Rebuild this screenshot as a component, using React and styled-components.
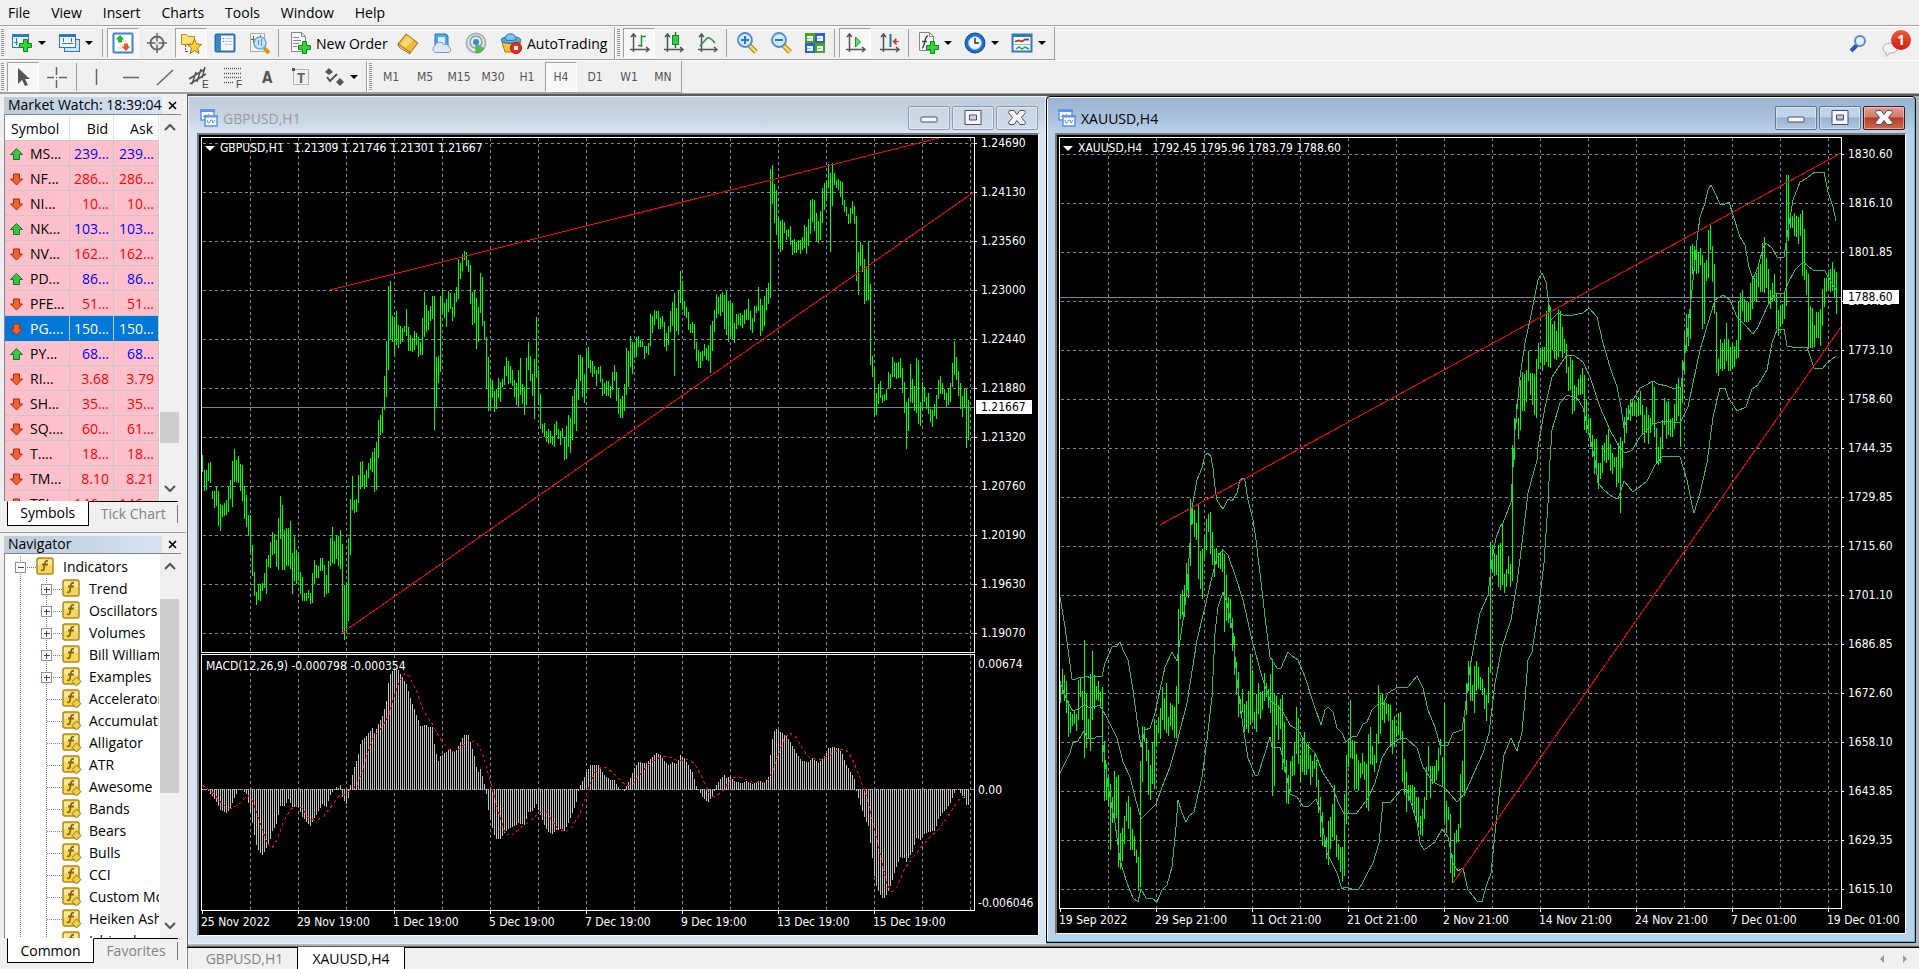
import styled, { createGlobalStyle, css } from "styled-components";

const MARKET_ROWS = [
  ["MS...", "239...", "239...", "up"],
  ["NF...", "286...", "286...", "down"],
  ["NI...", "10...", "10...", "down"],
  ["NK...", "103...", "103...", "up"],
  ["NV...", "162...", "162...", "down"],
  ["PD...", "86...", "86...", "up"],
  ["PFE...", "51...", "51...", "down"],
  ["PG....", "150...", "150...", "down"],
  ["PY...", "68...", "68...", "up"],
  ["RI...", "3.68", "3.79", "down"],
  ["SH...", "35...", "35...", "down"],
  ["SQ....", "60...", "61...", "down"],
  ["T....", "18...", "18...", "down"],
  ["TM...", "8.10", "8.21", "down"],
  ["TSL...", "146...", "146...", "down"],
];

const TREE = [
  ["Trend", "group"],
  ["Oscillators", "group"],
  ["Volumes", "group"],
  ["Bill Williams", "group"],
  ["Examples", "examples"],
  ["Accelerator", "custom"],
  ["Accumulation", "custom"],
  ["Alligator", "custom"],
  ["ATR", "custom"],
  ["Awesome", "custom"],
  ["Bands", "custom"],
  ["Bears", "custom"],
  ["Bulls", "custom"],
  ["CCI", "custom"],
  ["Custom Moving", "custom"],
  ["Heiken Ashi", "custom"],
  ["Ichimoku", "custom"],
];

const MENU = ["File", "View", "Insert", "Charts", "Tools", "Window", "Help"];
const PERIODS = ["M1", "M5", "M15", "M30", "H1", "H4", "D1", "W1", "MN"];

// high,low of every bar, one bar each 2px
const GBP_BARS =
  "455,472 470,491 470,490 463,481 462,483 491,499 491,508 487,506 491,526 504,531 505,517 503,516 500,515 487,512 480,499 461,507 449,482 460,482 456,483 464,491 465,501 486,519 495,527 515,536 515,552 545,576 572,596 592,605 584,600 584,601 583,591 573,588 559,594 555,567 542,568 532,555 534,554 540,567 518,570 496,539 505,570 530,570 528,566 528,566 521,569 553,594 537,581 550,584 553,581 572,594 577,601 593,601 593,601 590,598 593,604 573,603 560,584 565,578 566,578 558,571 558,571 565,597 575,594 561,593 538,566 527,563 541,564 536,559 536,566 530,569 544,632 585,640 583,632 538,621 499,555 476,510 500,513 499,512 475,503 462,489 461,487 475,489 470,486 463,478 458,470 452,472 448,492 442,490 420,458 415,435 407,433 376,410 341,397 286,370 281,339 316,342 317,357 311,345 325,348 326,344 328,342 326,332 309,336 327,351 335,351 338,352 331,350 333,345 337,357 342,355 318,355 292,337 305,332 311,330 306,321 296,319 296,430 357,407 356,383 296,372 290,312 303,318 299,327 291,312 293,309 307,321 293,317 287,302 259,299 263,279 254,271 251,260 252,266 260,272 265,304 292,325 290,323 298,349 307,342 273,313 277,326 321,340 337,389 357,411 379,410 380,398 391,412 389,409 378,398 382,402 379,387 366,385 357,376 361,384 366,383 370,386 380,397 383,405 370,407 358,395 384,404 387,415 358,405 342,370 356,381 374,396 359,419 317,378 370,405 394,429 424,433 423,437 431,442 429,444 431,443 436,445 424,447 421,435 429,439 431,445 428,438 437,460 426,459 415,447 418,453 396,440 389,424 379,431 355,400 355,381 357,397 374,403 351,392 347,368 360,373 361,377 366,374 370,386 367,374 366,382 379,396 383,394 381,396 381,396 386,398 372,390 365,381 372,401 389,414 399,418 396,418 384,411 348,395 351,387 336,367 342,374 342,358 337,357 336,347 340,347 341,347 346,359 346,353 343,355 314,346 316,333 310,325 311,319 311,329 318,329 316,327 322,347 333,351 326,345 311,332 302,326 293,376 308,331 290,335 271,303 281,310 301,316 307,318 312,330 324,333 322,333 324,349 342,361 350,368 352,368 351,361 344,356 348,360 345,361 325,373 321,351 310,332 294,318 297,314 294,316 292,312 295,329 291,335 301,342 302,336 303,339 323,343 314,329 314,325 313,326 315,328 310,324 309,320 299,320 311,330 318,333 306,322 306,313 287,311 299,336 305,331 296,326 288,310 283,304 169,298 165,204 184,223 190,235 218,247 221,252 220,250 222,233 230,240 229,237 226,245 240,255 239,253 242,253 240,250 240,254 237,250 225,248 227,254 219,246 200,234 199,222 200,231 213,241 221,243 211,240 188,223 183,210 182,200 164,188 173,252 163,206 173,185 180,188 179,190 181,197 182,205 200,212 207,216 214,224 208,223 201,214 206,224 216,281 252,295 242,266 245,272 259,304 266,301 241,300 284,365 356,377 369,417 393,415 384,404 381,398 395,403 394,401 389,400 372,388 374,388 357,377 362,377 363,379 362,378 358,378 368,393 382,413 402,449 398,431 364,402 379,403 386,411 358,413 360,424 402,426 382,410 387,402 397,409 393,414 409,422 410,427 404,416 395,419 380,399 376,394 383,394 389,400 393,407 388,405 383,402 363,387 341,375 357,380 371,396 383,409 396,417 388,408 389,448 400,440";

const XAU_BARS =
  "681,703 669,694 675,701 681,713 701,737 712,733 714,726 711,724 714,731 680,720 677,697 691,720 640,758 694,748 719,739 674,751 651,720 675,709 686,700 681,701 692,708 687,762 741,801 764,800 777,806 784,850 797,823 771,822 777,818 775,867 833,869 828,861 816,844 802,821 796,829 807,850 829,850 836,856 850,863 857,891 761,887 726,782 727,742 738,761 750,795 765,800 742,784 719,789 725,746 717,733 708,739 687,720 698,730 683,733 717,736 703,726 705,730 707,738 686,738 609,704 594,619 590,615 585,617 563,595 561,598 499,566 507,524 510,537 523,540 504,579 551,589 549,599 535,558 519,550 514,532 512,554 532,565 549,577 548,564 553,568 553,569 549,572 554,632 575,621 597,623 599,628 618,651 636,675 662,695 672,717 699,714 689,712 704,732 701,729 691,733 654,725 670,720 712,729 694,732 683,714 692,719 691,710 673,701 683,697 689,708 674,713 659,796 693,786 696,725 705,740 699,729 695,770 722,772 760,803 775,804 761,791 756,776 742,775 707,754 718,764 755,782 738,772 732,775 743,775 744,769 755,785 761,777 754,769 760,787 780,813 797,837 812,846 837,847 837,859 821,865 817,849 804,837 785,840 835,857 844,860 847,872 847,882 794,876 755,824 741,767 700,758 740,759 741,790 754,789 760,791 763,778 753,774 762,780 764,808 734,811 727,764 746,765 755,772 734,763 685,744 695,734 693,720 700,723 703,714 704,721 705,745 720,754 716,747 726,737 713,735 712,740 731,782 759,795 772,812 785,801 785,803 785,809 787,815 797,822 797,827 816,835 809,836 797,819 767,800 746,771 766,798 766,784 766,783 760,780 748,771 739,755 757,786 703,823 801,833 807,820 814,873 855,883 833,877 830,843 824,842 774,828 761,792 718,796 683,715 661,691 667,701 685,701 666,713 661,691 667,689 677,690 679,695 688,709 695,721 667,703 542,673 545,572 553,576 555,575 545,587 543,590 523,585 574,593 569,587 556,574 564,587 445,581 418,460 404,423 418,439 380,430 372,411 374,411 370,402 351,381 373,395 373,405 374,415 359,418 343,369 349,362 347,371 347,365 311,362 304,367 307,368 324,350 321,359 331,360 309,357 311,351 327,358 339,353 344,373 367,391 357,390 360,414 385,411 387,401 379,395 375,395 368,394 375,430 399,433 418,435 418,447 435,457 439,474 439,468 463,489 463,479 445,473 443,461 435,463 429,460 444,471 453,474 457,467 457,487 443,483 437,513 441,468 417,443 408,433 405,420 399,421 399,416 400,416 402,417 397,416 391,415 405,434 415,443 407,433 415,444 418,433 382,425 387,437 428,463 447,465 437,463 420,448 398,425 402,439 401,435 419,437 418,437 404,429 384,421 378,416 388,447 360,403 333,375 314,351 314,346 246,339 244,274 246,271 243,274 252,273 248,265 255,329 263,324 260,281 230,278 224,250 246,282 264,314 312,373 359,376 339,369 343,371 339,369 323,361 339,371 347,371 343,369 346,367 340,359 301,358 293,340 290,311 299,322 302,322 302,322 283,320 276,309 278,301 273,302 266,287 264,292 243,292 237,293 258,288 269,303 290,309 283,302 274,301 293,329 310,336 305,326 304,324 294,319 175,306 175,241 215,228 216,228 213,236 216,237 217,244 214,236 210,276 229,280 270,295 274,349 306,348 308,348 325,347 312,338 312,338 309,346 289,326 278,307 278,292 272,290 269,292 262,291 269,297 272,314";

// bar index,y of the histogram outline; the bars between are interpolated
const MACD_KEYS =
  "0,789 3,791 5,796 7,802 9,810 12,813 14,808 16,798 18,790 20,789 22,794 24,812 25,823 26,835 27,845 28,850 30,855 32,848 34,839 35,831 37,824 38,815 39,806 41,806 43,799 45,807 48,807 50,817 54,826 56,818 58,811 60,804 62,807 64,795 66,789 67,787 68,788 69,785 70,797 72,804 73,798 74,785 75,775 76,767 78,754 79,744 80,740 82,736 85,728 86,733 88,724 90,716 91,709 92,701 93,683 94,674 95,671 97,669 98,670 100,677 102,684 104,698 106,709 108,720 109,726 112,725 113,727 115,727 116,744 117,754 118,761 119,756 121,753 124,749 125,752 127,750 128,746 130,738 131,735 133,735 134,742 136,756 137,767 138,772 139,769 140,776 141,784 142,794 143,810 144,820 145,828 146,835 147,839 149,839 151,833 153,829 156,826 158,823 161,825 163,812 165,811 167,804 169,815 171,825 173,832 175,834 177,830 180,829 181,831 183,823 185,813 187,802 188,791 189,785 190,781 192,772 194,765 198,765 199,768 201,775 204,780 206,780 208,787 209,789 211,791 212,786 214,778 216,768 218,762 222,763 224,759 227,753 229,755 231,761 233,765 235,762 237,764 239,755 241,758 243,765 245,772 247,786 248,789 250,797 252,801 253,802 255,796 257,785 259,779 261,775 262,778 264,776 266,781 270,783 272,781 275,784 278,781 281,782 283,777 284,755 285,739 286,731 287,729 290,733 292,736 294,742 296,749 298,756 300,761 303,762 305,758 308,763 310,759 312,753 313,748 316,747 318,748 320,754 322,765 325,775 326,779 327,791 329,805 331,817 333,826 334,843 335,858 336,876 337,886 338,891 340,898 341,898 342,895 344,886 346,873 347,867 349,857 351,858 352,862 353,858 355,852 357,838 359,840 361,834 363,832 366,831 367,826 368,819 370,813 372,809 374,803 376,793 377,789 378,790 380,796 381,798 382,805 383,805";

const MACD_SIGNAL =
  "202,785 208,789 215,795 223,805 232,809 240,803 248,795 253,802 260,823 267,843 272,848 277,840 283,823 290,810 296,805 302,808 308,817 316,821 323,817 330,808 338,797 347,793 357,785 362,772 367,755 373,738 382,727 389,715 393,700 399,682 405,673 409,676 417,692 423,710 433,725 442,742 452,752 458,750 469,740 477,743 483,755 490,780 497,807 505,833 511,836 520,828 528,823 540,812 547,813 557,828 566,832 573,826 580,813 588,790 595,772 602,767 607,768 617,777 627,786 633,784 642,772 650,763 662,756 670,757 678,761 688,759 695,764 702,777 708,792 713,797 722,792 732,777 740,777 752,782 767,782 773,770 780,750 785,737 790,733 797,738 803,750 810,758 820,760 830,755 838,750 845,749 852,758 860,778 867,798 873,823 880,853 887,885 892,892 897,887 905,868 915,855 928,839 940,828 950,813 960,798 968,796";

const BOLLINGER = [
  "1060,597 1065,627 1072,679 1076,679 1080,677 1083,678 1087,676 1090,678 1095,676 1102,676 1105,663 1112,647 1117,646 1120,642 1123,650 1128,660 1133,690 1138,727 1141,747 1145,730 1150,728 1155,713 1160,690 1165,667 1172,652 1177,661 1182,627 1187,590 1190,543 1192,507 1193,502 1197,480 1202,468 1205,455 1208,453 1211,457 1213,468 1215,487 1217,500 1220,505 1223,509 1228,499 1232,501 1237,493 1240,480 1243,478 1245,481 1248,500 1253,520 1256,540 1260,573 1265,617 1270,657 1277,668 1281,668 1288,652 1292,656 1298,660 1305,677 1313,702 1321,725 1325,710 1328,707 1333,712 1337,728 1342,733 1346,742 1352,737 1357,736 1363,724 1367,722 1372,710 1380,702 1383,705 1388,693 1398,687 1408,687 1417,676 1423,688 1428,710 1435,727 1440,745 1448,745 1453,733 1462,730 1465,710 1470,667 1475,640 1480,613 1488,595 1492,560 1496,538 1500,527 1503,523 1511,502 1513,467 1515,430 1520,377 1525,343 1530,320 1535,295 1538,280 1542,273 1546,282 1548,297 1551,320 1558,313 1563,315 1573,315 1583,313 1589,308 1597,317 1603,343 1610,367 1617,387 1621,407 1624,428 1628,417 1633,400 1640,388 1648,384 1653,381 1658,384 1667,386 1674,389 1681,387 1683,370 1687,337 1692,290 1697,240 1700,217 1705,203 1708,190 1711,185 1715,193 1720,204 1725,204 1729,202 1733,215 1740,237 1745,245 1749,267 1753,279 1758,267 1763,248 1766,243 1772,248 1777,257 1784,257 1788,230 1793,200 1800,182 1807,178 1815,172 1824,172 1828,192 1833,207 1836,221",
  "1060,682 1068,703 1073,711 1080,708 1084,705 1090,708 1100,705 1108,720 1117,738 1123,762 1130,777 1135,797 1141,819 1147,813 1156,804 1162,787 1170,767 1177,742 1187,703 1197,640 1205,607 1212,577 1217,557 1223,550 1228,555 1235,575 1243,600 1252,640 1262,677 1270,700 1282,710 1290,725 1298,730 1307,745 1315,753 1323,773 1333,788 1338,802 1344,814 1357,813 1368,798 1375,783 1382,758 1388,748 1400,738 1407,739 1417,748 1423,767 1433,782 1445,788 1457,802 1465,793 1470,782 1483,753 1489,733 1495,683 1502,647 1511,620 1517,583 1522,543 1528,493 1537,460 1538,447 1545,407 1552,377 1562,362 1567,355 1575,356 1583,362 1590,377 1600,407 1610,430 1620,448 1625,453 1632,450 1640,437 1653,424 1665,421 1680,423 1688,407 1693,383 1700,350 1708,323 1715,300 1723,295 1730,300 1737,317 1745,325 1753,334 1758,327 1767,307 1775,293 1784,294 1788,283 1795,270 1803,262 1813,270 1825,271 1830,280 1836,290",
  "1060,773 1070,753 1073,742 1078,741 1084,731 1087,738 1093,739 1098,736 1102,737 1105,760 1108,787 1115,823 1120,860 1127,883 1133,898 1138,902 1141,889 1146,898 1153,899 1157,902 1162,890 1167,885 1172,867 1176,827 1178,800 1182,813 1186,822 1189,816 1194,812 1202,777 1207,740 1212,697 1215,633 1218,607 1223,592 1227,603 1233,633 1237,680 1243,727 1248,758 1255,775 1258,775 1265,753 1270,737 1272,747 1280,747 1285,767 1290,794 1297,797 1303,806 1309,806 1316,799 1320,810 1327,853 1337,873 1342,889 1345,887 1352,889 1359,889 1363,882 1367,874 1373,863 1379,843 1383,802 1390,803 1402,789 1407,790 1411,803 1417,823 1420,843 1424,850 1435,842 1442,829 1448,837 1453,863 1458,871 1463,868 1468,890 1477,901 1482,902 1486,887 1491,873 1495,833 1500,787 1504,755 1511,738 1517,751 1522,732 1525,700 1528,660 1532,652 1538,613 1544,563 1548,503 1550,460 1552,430 1560,403 1567,395 1577,398 1583,408 1589,433 1595,460 1598,483 1605,491 1613,497 1618,499 1624,481 1633,492 1647,481 1655,465 1662,457 1670,456 1680,457 1687,480 1692,505 1694,513 1700,493 1707,463 1713,417 1720,388 1725,388 1728,397 1737,411 1746,407 1752,389 1758,385 1767,370 1772,343 1777,330 1784,329 1787,346 1797,348 1807,347 1814,368 1822,369 1827,363 1836,356",
];

const GBP = {
  title: "GBPUSD,H1",
  values: "1.21309 1.21746 1.21301 1.21667",
  price: "1.21667",
  priceY: 407,
  origin: [202, 138],
  gridY: 143,
  gridX: 250,
  bars: GBP_BARS,
  bands: [],
  trends: ["330,290 939,138", "342,633 974,192"],
  prices: ["1.24690", "1.24130", "1.23560", "1.23000", "1.22440", "1.21880", "1.21320", "1.20760", "1.20190", "1.19630", "1.19070"],
  dates: ["25 Nov 2022", "29 Nov 19:00", "1 Dec 19:00", "5 Dec 19:00", "7 Dec 19:00", "9 Dec 19:00", "13 Dec 19:00", "15 Dec 19:00"],
};

const XAU = {
  title: "XAUUSD,H4",
  values: "1792.45 1795.96 1783.79 1788.60",
  price: "1788.60",
  priceY: 297,
  origin: [1060, 138],
  gridY: 154,
  gridX: 1108,
  bars: XAU_BARS,
  bands: BOLLINGER,
  trends: ["1160,525 1841,153", "1453,883 1841,327"],
  prices: ["1830.60", "1816.10", "1801.85", "1787.35", "1773.10", "1758.60", "1744.35", "1729.85", "1715.60", "1701.10", "1686.85", "1672.60", "1658.10", "1643.85", "1629.35", "1615.10"],
  dates: ["19 Sep 2022", "29 Sep 21:00", "11 Oct 21:00", "21 Oct 21:00", "2 Nov 21:00", "14 Nov 21:00", "24 Nov 21:00", "7 Dec 01:00", "19 Dec 01:00"],
};

const pairs = (text) => text.split(" ").map((p) => p.split(",").map(Number));

const barPath = (text, x0) =>
  pairs(text)
    .map(([high, low], i) => `M${x0 + i * 2 + 0.5} ${high}V${low}`)
    .join("");

const macdPath = () => {
  const keys = pairs(MACD_KEYS);
  let path = "";
  for (let i = 0; i < keys.length - 1; i++) {
    const [a, ya] = keys[i];
    const [b, yb] = keys[i + 1];
    for (let k = a; k < b; k++) {
      const y = Math.round(ya + ((yb - ya) * (k - a)) / (b - a));
      path += `M${202.5 + k * 2} ${Math.min(y, 789)}V${Math.max(y, 790)}`;
    }
  }
  return path + "M968.5 789V805";
};

const steps = (start, size, count) => Array.from({ length: count }, (_, i) => start + i * size + 0.5);

/* ---------- toolbar icons ---------- */

const Plus = ({ x = 10, y = 9 }) => (
  <path
    transform={`translate(${x} ${y})`}
    d="M4.5.5h4v4h4v4h-4v4h-4v-4h-4v-4h4z"
    fill="#2fd435"
    stroke="#0b8a14"
  />
);

const Axes = () => <path d="M6.500 3v18M3 18.500h19M4 6l2.500-3L9 6M19 16l3 2.500-3 2.500M6.500 16v5" stroke="#555" fill="none" strokeWidth="1.500" />;

const Lens = ({ sign }) => (
  <>
    <path d="M14 14l7 7" stroke="#b98716" strokeWidth="5" />
    <path d="M14 14l7 7" stroke="#ffd75e" strokeWidth="2.500" />
    <circle cx="10" cy="9" r="7" fill="#cfeafd" stroke="#4a8ecb" strokeWidth="1.800" />
    <path d={sign} stroke="#3278b6" strokeWidth="2" />
  </>
);

const ICONS = {
  newChart: (
    <>
      <rect x="2.500" y="3.500" width="16" height="13" fill="#e8f3fc" stroke="#2f79c0" />
      <path d="M2 4.500h17" stroke="#2f79c0" strokeWidth="3" />
      <path d="M6.500 7v7M4 11.500h4" stroke="#2f79c0" />
      <Plus x={9} y={8} />
    </>
  ),
  profiles: (
    <>
      <rect x="7.500" y="8.500" width="15" height="12" fill="#cfe4f6" stroke="#2f79c0" />
      <rect x="2.500" y="3.500" width="16" height="13" fill="#f1f8fe" stroke="#2f79c0" />
      <path d="M2 4.500h17" stroke="#2f79c0" strokeWidth="3" />
      <path d="M6.500 7v4M14.500 7v4M5 12.500h11" stroke="#2f79c0" />
    </>
  ),
  marketWatch: (
    <>
      <rect x="2.500" y="2.500" width="19" height="19" rx="1" fill="#fff" stroke="#3b82c6" strokeWidth="2" />
      <path d="M6 10h10M8 14h10M6 17h6" stroke="#ccc" />
      <path d="M9 4l4.500 4.500h-2.500v3H7v-3H4.500z" fill="#25b62c" />
      <path d="M15 20l4.500-4.500h-2.500v-3h-4v3h-2.500z" fill="#f0561d" />
    </>
  ),
  crosshair: (
    <>
      <circle cx="12" cy="12" r="6.500" fill="none" stroke="#666" strokeWidth="2" />
      <path d="M12 2v20M2 12h20" stroke="#666" strokeWidth="1.500" />
      <path d="M12 10v4M10 12h4" stroke="#fff" />
    </>
  ),
  navigator: (
    <>
      <path d="M2.500 3.500h5l2 2h6v8h-13z" fill="#ffe274" stroke="#b88a14" />
      <path d="M6.500 14v7M7 20.500h3" stroke="#555" strokeDasharray="2 1" />
      <path d="M15.500 8l2 5 5 .500-4 3.500 1.500 5.500-4.500-3-4.500 3 1.500-5.500-4-3.500 5-.500z" fill="#ffd13b" stroke="#a87408" />
    </>
  ),
  terminal: (
    <>
      <rect x="2.500" y="3.500" width="19" height="17" rx="1" fill="#f4f9ff" stroke="#2b6fb3" strokeWidth="2" />
      <rect x="3" y="4" width="5" height="16" fill="#3c86cb" />
      <path d="M10 7.500h1M10 10.500h1" stroke="#9f4b3c" />
      <path d="M12 7.500h7M12 10.500h7M12 13.500h7" stroke="#b4cbe2" />
    </>
  ),
  tester: (
    <>
      <path d="M3.500 2.500h14v18h-14z" fill="#f4f4ec" stroke="#aaa" />
      <path d="M6.500 5v7M4 8.500h4M13.500 4v5" stroke="#666" />
      <path d="M17 17l5 5" stroke="#d19b24" strokeWidth="4" />
      <circle cx="13" cy="12" r="6" fill="#c9e4fa" stroke="#6ea6da" strokeWidth="1.500" />
      <path d="M11.500 9v5M14.500 8v7" stroke="#4a8ecb" />
    </>
  ),
  newOrder: (
    <>
      <path d="M3.500 1.500h10l4 4v15h-14z" fill="#fafafa" stroke="#888" />
      <path d="M13.500 1.500v4h4M5 6.500h6M5 9.500h8M5 12.500h6M5 15.500h4" stroke="#888" fill="none" />
      <Plus x={10} y={10} />
    </>
  ),
  book: (
    <>
      <path d="M2 13l8-10 12 9-8 10z" fill="#edb83b" stroke="#9a6a0d" />
      <path d="M2 13l1 3 11 7v-1.500z" fill="#fff0b0" stroke="#9a6a0d" />
      <path d="M4 13l7-8 6 4-7 8z" fill="#f9d76f" />
    </>
  ),
  community: (
    <>
      <path d="M5 3h11l2 2v11H5z" fill="#48a9ee" stroke="#1c78c4" />
      <path d="M8 6h7v7H8z" fill="#d9f0ff" />
      <path d="M5 21.500a4 4 0 0 1 0-7 5 5 0 0 1 9-1 4 4 0 0 1 5 2.500 3 3 0 0 1 0 5.500z" fill="#dfe7f5" stroke="#7f9bc4" />
    </>
  ),
  signals: (
    <>
      <circle cx="12" cy="12" r="9.500" fill="#e4eaea" stroke="#a9b8b6" strokeWidth="2" />
      <circle cx="12" cy="11" r="6" fill="none" stroke="#86a39f" strokeWidth="1.500" />
      <path d="M12 12v10a9 9 0 0 0 8-5" fill="#58bb57" stroke="#4aa84e" />
      <circle cx="12" cy="11" r="3" fill="#3c86cb" />
    </>
  ),
  autoTrading: (
    <>
      <path d="M3 11l3 10h10l6-10z" fill="#f6c53c" stroke="#a9790e" />
      <ellipse cx="12" cy="9" rx="10" ry="3.500" fill="#5aa9de" stroke="#2a74ab" />
      <path d="M6 8c0-7 11-7 11 0 0 2-11 2-11 0z" fill="#7fc3ee" stroke="#2a74ab" />
      <circle cx="17" cy="17" r="5.500" fill="#e33022" stroke="#a81408" />
      <rect x="15" y="15" width="4" height="4" fill="#fff" />
    </>
  ),
  barChart: (
    <>
      <Axes />
      <path d="M14.500 4v12M15 5.500h4M11 14.500h3" stroke="#1c9230" strokeWidth="1.500" />
    </>
  ),
  candles: (
    <>
      <Axes />
      <path d="M14.500 1v16" stroke="#1c7c2c" strokeWidth="1.500" />
      <rect x="11.500" y="4.500" width="6" height="9" fill="#33cf45" stroke="#11862a" />
    </>
  ),
  lineChart: (
    <>
      <Axes />
      <path d="M5 15l7-8c2-1 4 0 8 5" stroke="#2c9440" strokeWidth="1.500" fill="none" />
    </>
  ),
  zoomIn: <Lens sign="M6 9h8M10 5v8" />,
  zoomOut: <Lens sign="M6 9h8" />,
  tile: (
    <>
      <path d="M2 2h10v10H2z" fill="#47a81c" />
      <path d="M12 2h10v10H12zM2 12h10v10H2z" fill="#2c62cf" />
      <path d="M12 12h10v10H12z" fill="#47a81c" />
      <path d="M4 5h6v5H4zM14 5h6v5h-6zM4 15h6v5H4zM14 15h6v5h-6z" fill="#eef7ff" />
      <path d="M4 7.500h4M14 7.500h4M4 17.500h4M14 17.500h4" stroke="#9fbbd8" />
    </>
  ),
  autoScroll: (
    <>
      <Axes />
      <path d="M12.500 6l5 5-5 5z" fill="#5fdc6f" stroke="#1c9230" />
    </>
  ),
  shift: (
    <>
      <Axes />
      <path d="M13.500 3v13" stroke="#2b6fb3" strokeWidth="2" />
      <path d="M22 10.500h-5M19 7.500l-3 3 3 3z" stroke="#c6401a" fill="#c6401a" />
    </>
  ),
  indicators: (
    <>
      <path d="M3.500 1.500h10l4 4v14h-14z" fill="#fafafa" stroke="#888" />
      <path d="M13.500 1.500v4h4" stroke="#888" fill="none" />
      <path d="M6 17c3 0 2-12 6-12M6 10.500h5" stroke="#444" fill="none" strokeWidth="1.500" />
      <Plus x={10} y={10} />
    </>
  ),
  clock: (
    <>
      <circle cx="12" cy="12" r="10" fill="#1d6fcb" stroke="#0e4b95" />
      <circle cx="12" cy="12" r="6.500" fill="#f1f7fd" stroke="#7cb6ee" />
      <path d="M12 7v5h4" stroke="#333" fill="none" strokeWidth="1.500" />
    </>
  ),
  templates: (
    <>
      <rect x="2.500" y="3.500" width="19" height="17" fill="#f5faff" stroke="#2f79c0" strokeWidth="2" />
      <path d="M2 4.500h20" stroke="#2f79c0" strokeWidth="3" />
      <path d="M5 10.500l4-1 3 1 3-2h4" stroke="#a33a1c" fill="none" strokeWidth="1.800" />
      <path d="M3 13.500h18" stroke="#8fb8de" />
      <path d="M6 18l3-2 3 2 3-2 4 2" stroke="#2fa23c" fill="none" strokeWidth="1.500" />
    </>
  ),
  cursor: <path d="M7 3v16l4-4 3 6 3-1-3-6h5z" fill="#555" />,
  cross: <path d="M11.500 2v8M11.500 15v8M2 12.500h7M14 12.500h8M11 12.500h1" stroke="#666" strokeWidth="1.500" />,
  vline: <path d="M11.500 4v16" stroke="#666" strokeWidth="1.500" />,
  hline: <path d="M4 12.500h16" stroke="#666" strokeWidth="1.500" />,
  trend: <path d="M4 20L20 5" stroke="#666" strokeWidth="1.500" />,
  channel: (
    <>
      <path d="M2 14L18 4M3 19L19 9M5 19L9 7M10 17l4-13M15 13l3-11" stroke="#555" strokeWidth="1.500" />
      <text x="15" y="23" fontSize="10" fontFamily="Liberation Sans, sans-serif" fill="#444">E</text>
    </>
  ),
  fibo: (
    <>
      <path d="M3 3.500h18M3 8.500h18M3 12.500h18M3 17.500h10" stroke="#555" strokeDasharray="1 1" strokeWidth="1.500" />
      <text x="15" y="23" fontSize="10" fontFamily="Liberation Sans, sans-serif" fill="#444">F</text>
    </>
  ),
  text: <text x="7" y="18" fontSize="15" fontWeight="700" fontFamily="DejaVu Sans Condensed, sans-serif" fill="#555">A</text>,
  label: (
    <>
      <rect x="4.500" y="4.500" width="15" height="15" fill="none" stroke="#777" strokeDasharray="1 1" />
      <path d="M3 3h3v3H3z" fill="#555" />
      <text x="8" y="18" fontSize="14" fontWeight="700" fontFamily="Noto Sans, sans-serif" fill="#666">T</text>
    </>
  ),
  arrows: (
    <>
      <path d="M7 3l4 4-4 3-4-3zM18 13l4 4-4 4-4-4z" fill="#555" />
      <path d="M5 12l3 4 7-7" stroke="#555" strokeWidth="2" fill="none" />
    </>
  ),
  search: (
    <>
      <path d="M11 13l-6 6" stroke="#2c58b8" strokeWidth="4" />
      <circle cx="14" cy="9" r="5" fill="#e3eefb" stroke="#5e88d6" strokeWidth="2" />
    </>
  ),
  chat: <path d="M10 9c-5 0-8 2-8 5.500 0 2 1 3.500 3 4l0 4 3.500-3.500c6 0 8-2 8-4.500 0-3-3-5.500-6.500-5.500z" fill="#f3f3f7" stroke="#aaa" />,
};

const Icon = ({ name }) => (
  <svg width="24" height="24" viewBox="0 0 24 24" aria-hidden="true">
    {ICONS[name]}
  </svg>
);

const Tool = ({ name, label, active, menu }) => (
  <ToolButton type="button" aria-label={label} $active={active} $menu={menu}>
    <Icon name={name} />
    {menu && <Caret />}
  </ToolButton>
);

const ArrowMark = ({ dir }) => (
  <svg width="15" height="13" viewBox="0 0 15 13" aria-hidden="true">
    {dir === "up" ? (
      <path d="M7.500.5l6 6h-3v5h-6v-5h-3z" fill="#35c644" stroke="#14742a" />
    ) : (
      <path d="M7.500 12l6-6h-3v-5h-6v5h-3z" fill="#f2622f" stroke="#a12c0a" />
    )}
  </svg>
);

const FolderMark = ({ custom }) => (
  <svg width="20" height="20" viewBox="0 0 20 20" aria-hidden="true">
    <rect x="1" y="1" width="16" height="16" rx="2" fill="#f5d75c" stroke="#b08a1c" strokeWidth="1.500" />
    <path d="M2 3h14v5H2z" fill="#fbe99a" />
    <path d="M12 4c-4-1-3 4-4 7 0 2-1 3-3 2M6 7.500h6" fill="none" stroke="#8a6412" strokeWidth="1.800" />
    {custom && <path d="M14.500 10l4.500 4.500-4.500 4.500-4.500-4.500z" fill="#f3cf45" stroke="#94700f" />}
  </svg>
);

const Branch = ({ level, sign }) => {
  const x = level === 1 ? 15.5 : 41.5;
  return (
    <svg width={level === 1 ? 31 : 57} height="22" aria-hidden="true" shapeRendering="crispEdges">
      <path d={`M15.5 0v22M${x} 0v22M${x} 11.5h16`} stroke="#808080" strokeDasharray="1 1" />
      {sign && (
        <>
          <rect x={x - 5} y="6.500" width="10" height="10" fill="#fff" stroke="#919191" />
          <path d={`M${x - 3} 11.5h6${sign === "+" ? `M${x} 8.5v6` : ""}`} stroke="#2b4a9c" />
        </>
      )}
    </svg>
  );
};

const Chevron = ({ up }) => (
  <svg width="12" height="8" viewBox="0 0 12 8" aria-hidden="true">
    <path d={up ? "M1 7l5-5 5 5" : "M1 1l5 5 5-5"} fill="none" stroke="#555" strokeWidth="2" />
  </svg>
);

const Scroll = ({ before, size, after }) => (
  <ScrollBar>
    <Chevron up />
    <Space $grow={before} />
    <Thumb $grow={size} />
    <Space $grow={after} />
    <Chevron />
  </ScrollBar>
);

const MarketWatch = () => (
  <Panel $grow={438}>
    <PanelTitle>
      <h2>Market Watch: 18:39:04</h2>
      <CloseButton type="button" aria-label="Close Market Watch">
        <CloseMark />
      </CloseButton>
    </PanelTitle>
    <ListBox>
      <ListView>
        <Quotes>
          <colgroup>
            <col width="65" />
            <col width="44" />
            <col width="45" />
          </colgroup>
          <thead>
            <tr>
              <th>Symbol</th>
              <th>Bid</th>
              <th>Ask</th>
            </tr>
          </thead>
          <tbody>
            {MARKET_ROWS.map(([symbol, bid, ask, dir]) => (
              <QuoteRow key={symbol} $dir={dir} $selected={symbol === "PG...."}>
                <td>
                  <SymbolName>
                    <ArrowMark dir={dir} />
                    {symbol}
                  </SymbolName>
                </td>
                <td>{bid}</td>
                <td>{ask}</td>
              </QuoteRow>
            ))}
          </tbody>
        </Quotes>
      </ListView>
      <Scroll before={281} size={31} after={41} />
    </ListBox>
    <PanelTabs>
      <PanelTab type="button" $active $width={82}>Symbols</PanelTab>
      <PanelTab type="button" $width={90}>Tick Chart</PanelTab>
    </PanelTabs>
  </Panel>
);

const Navigator = () => (
  <Panel $grow={437} $line>
    <PanelTitle>
      <h2>Navigator</h2>
      <CloseButton type="button" aria-label="Close Navigator">
        <CloseMark />
      </CloseButton>
    </PanelTitle>
    <ListBox>
      <ListView>
        <Tree>
          <TreeRow>
            <Branch level={1} sign="-" />
            <FolderMark />
            Indicators
          </TreeRow>
          {TREE.map(([name, kind]) => (
            <TreeRow key={name}>
              <Branch level={2} sign={kind !== "custom" && "+"} />
              <FolderMark custom={kind !== "group"} />
              {name}
            </TreeRow>
          ))}
        </Tree>
      </ListView>
      <Scroll before={29} size={194} after={129} />
    </ListBox>
    <PanelTabs>
      <PanelTab type="button" $active $width={87}>Common</PanelTab>
      <PanelTab type="button" $width={84}>Favorites</PanelTab>
    </PanelTabs>
  </Panel>
);

const CloseMark = () => (
  <svg width="9" height="9" viewBox="0 0 9 9" aria-hidden="true">
    <path d="M1 1l7 7M8 1L1 8" stroke="#000" strokeWidth="1.600" />
  </svg>
);

const WindowIcon = () => (
  <svg width="18" height="18" viewBox="0 0 18 18" aria-hidden="true">
    <rect x="1" y="1" width="13" height="10" fill="#fff" stroke="#5b93ee" strokeWidth="1.500" />
    <path d="M0 1.500h15" stroke="#5b93ee" strokeWidth="3" />
    <path d="M3 8l2-2 2 1 2-2" stroke="#5b93ee" fill="none" />
    <rect x="5" y="7" width="12" height="10" fill="#fff" stroke="#5b93ee" strokeWidth="1.500" />
    <path d="M4 7.500h14" stroke="#5b93ee" strokeWidth="2" />
    <path d="M7 11l1 3 1 0 2-3 1 0 1 3 2-3" stroke="#5b93ee" fill="none" />
  </svg>
);

const ControlMark = ({ kind }) => (
  <svg width="18" height="18" viewBox="0 0 18 18" aria-hidden="true" fill="#f6f6f6" stroke="#484f63">
    {kind === "Minimize" && <rect x="1" y="8" width="16" height="5" rx="1" />}
    {kind === "Maximize" && <path fillRule="evenodd" d="M1 1.500h16v14H1zM5.500 6h7v5h-7z" />}
    {kind === "Close" && <path d="M1.500 1.500H6l3 4 3-4h4.500l1 2-4 5 4 5-1 2H12l-3-4-3 4H1.500l-1-2 4-5-4-5z" />}
  </svg>
);

const PricePlot = ({ chart }) => {
  const [x, y] = chart.origin;
  return (
    <Plot>
      <PlotSvg role="img" aria-label={`${chart.title} price chart`}>
        <g transform={`translate(${-x} ${-y})`} fill="none">
          <g stroke="#778899" strokeDasharray="3 3">
            {steps(chart.gridX, 48, 16).map((gx) => (
              <path key={gx} d={`M${gx} ${y}v1200`} />
            ))}
            {steps(chart.gridY, 49, 16).map((gy) => (
              <path key={gy} d={`M${x + 1} ${gy}h1600`} />
            ))}
          </g>
          <path d={`M${x} ${chart.priceY + 0.5}h1600`} stroke="#778899" />
          <path d={barPath(chart.bars, x)} stroke="#00ff00" />
          {chart.bands.map((points) => (
            <polyline key={points} points={points} stroke="#3cb371" />
          ))}
          {chart.trends.map((points) => (
            <polyline key={points} points={points} stroke="#ff0000" />
          ))}
        </g>
      </PlotSvg>
      <PlotTitle>
        <WhiteCaret />
        <span>{chart.title}</span>
        <PlotValues>{chart.values}</PlotValues>
      </PlotTitle>
    </Plot>
  );
};

const MacdPlot = ({ chart }) => (
  <PlotRow $grow={257}>
    <Plot>
      <PlotSvg role="img" aria-label="MACD histogram">
        <g transform="translate(-202 -655)" fill="none">
          <g stroke="#778899" strokeDasharray="3 3">
            {steps(chart.gridX, 48, 16).map((gx) => (
              <path key={gx} d={`M${gx} 655v600`} />
            ))}
            <path d="M203 789.500h1600" />
          </g>
          <path d={macdPath()} stroke="#c0c0c0" />
          <polyline points={MACD_SIGNAL} stroke="#ff0000" strokeDasharray="3 3" />
        </g>
      </PlotSvg>
      <MacdTitle>MACD(12,26,9) -0.000798 -0.000354</MacdTitle>
    </Plot>
    <MacdAxis>
      <span>0.00674</span>
      <span>0.00</span>
      <span>-0.006046</span>
    </MacdAxis>
  </PlotRow>
);

const ChartWindow = ({ chart, active, macd }) => (
  <Frame $active={active}>
    <TitleBar $active={active}>
      <WindowIcon />
      <h2>{chart.title}</h2>
      {["Minimize", "Maximize", "Close"].map((kind) => (
        <Control key={kind} type="button" aria-label={`${kind} ${chart.title}`} $active={active} $danger={active && kind === "Close"}>
          <ControlMark kind={kind} />
        </Control>
      ))}
    </TitleBar>
    <ChartBody $active={active}>
      <PlotRow $grow={516}>
        <PricePlot chart={chart} />
        <Axis $start={chart.gridY - 143}>
          {chart.prices.map((p) => (
            <Tick key={p}>{p}</Tick>
          ))}
          <PriceTag style={{ top: chart.priceY - 144 }}>{chart.price}</PriceTag>
        </Axis>
      </PlotRow>
      {macd && <MacdPlot chart={chart} />}
      <Dates>
        {chart.dates.map((d) => (
          <DateTick key={d}>{d}</DateTick>
        ))}
      </Dates>
    </ChartBody>
  </Frame>
);

export default function App() {
  return (
    <Screen>
      <GlobalStyle />
      <MenuBar>
        {MENU.map((m) => (
          <MenuButton key={m} type="button">{m}</MenuButton>
        ))}
      </MenuBar>
      <ToolRow>
        <Strip>
          <Grip />
          <Tool name="newChart" label="New chart" menu />
          <Tool name="profiles" label="Profiles" menu />
          <Divider />
          <Tool name="marketWatch" label="Market Watch" active />
          <Tool name="crosshair" label="Data Window" />
          <Tool name="navigator" label="Navigator" active />
          <Tool name="terminal" label="Terminal" />
          <Tool name="tester" label="Strategy Tester" />
          <Divider />
          <WideTool type="button" $width={109}>
            <Icon name="newOrder" />
            New Order
          </WideTool>
          <Tool name="book" label="MetaEditor" />
          <Tool name="community" label="Community" />
          <Tool name="signals" label="Signals" />
          <WideTool type="button" $width={120}>
            <Icon name="autoTrading" />
            AutoTrading
          </WideTool>
        </Strip>
        <Strip>
          <Grip />
          <Tool name="barChart" label="Bar Chart" active />
          <Tool name="candles" label="Candlesticks" />
          <Tool name="lineChart" label="Line Chart" />
          <Divider />
          <Tool name="zoomIn" label="Zoom In" />
          <Tool name="zoomOut" label="Zoom Out" />
          <Tool name="tile" label="Tile Windows" />
          <Divider />
          <Tool name="autoScroll" label="Auto Scroll" active />
          <Tool name="shift" label="Chart Shift" />
          <Divider />
          <Tool name="indicators" label="Indicators" menu />
          <Tool name="clock" label="Periods" menu />
          <Tool name="templates" label="Templates" menu />
        </Strip>
        <RightTools>
          <Tool name="search" label="Search" />
          <ChatButton type="button" aria-label="Messages">
            <Icon name="chat" />
            <Badge>1</Badge>
          </ChatButton>
        </RightTools>
      </ToolRow>
      <ToolRow $last>
        <Strip>
          <Grip />
          <Tool name="cursor" label="Cursor" active />
          <Tool name="cross" label="Crosshair" />
          <Divider />
          <Tool name="vline" label="Vertical Line" />
          <Tool name="hline" label="Horizontal Line" />
          <Tool name="trend" label="Trendline" />
          <Tool name="channel" label="Equidistant Channel" />
          <Tool name="fibo" label="Fibonacci Retracement" />
          <Tool name="text" label="Text" />
          <Tool name="label" label="Text Label" />
          <Tool name="arrows" label="Arrows" menu />
        </Strip>
        <Strip>
          <Grip />
          {PERIODS.map((p) => (
            <Period key={p} type="button" $active={p === "H4"}>{p}</Period>
          ))}
        </Strip>
      </ToolRow>
      <Workspace>
        <Sidebar>
          <MarketWatch />
          <Navigator />
        </Sidebar>
        <Main>
          <Desktop>
            <ChartWindow chart={GBP} macd />
            <ChartWindow chart={XAU} active />
          </Desktop>
          <ChartTabs>
            <ChartTab type="button">GBPUSD,H1</ChartTab>
            <ChartTab type="button" $active>XAUUSD,H4</ChartTab>
            <TabArrows>
              <ArrowButton type="button" aria-label="Previous chart" $dir="left" />
              <ArrowButton type="button" aria-label="Next chart" $dir="right" />
            </TabArrows>
          </ChartTabs>
        </Main>
      </Workspace>
    </Screen>
  );
}

const GlobalStyle = createGlobalStyle`
  * {
    box-sizing: border-box;
  }
  body {
    margin: 0;
    overflow: hidden;
    background: #f0f0f0;
  }
  button {
    padding: 0;
    border: 0;
    background: none;
    font: inherit;
    color: inherit;
  }
  h2 {
    margin: 0;
    font-size: inherit;
    font-weight: 400;
  }
  svg {
    flex: none;
    display: block;
  }
`;

const center = css`
  display: flex;
  align-items: center;
  justify-content: center;
`;

const chartFont = css`
  font-family: "DejaVu Sans Condensed", "Noto Sans", sans-serif;
  font-size: 12px;
  line-height: 12px;
  color: #fff;
  white-space: nowrap;
`;

const pressed = css`
  border: 1px solid;
  border-color: #a0a0a0 #fff #fff #a0a0a0;
  background: #f8f8f8;
`;

const Screen = styled.div`
  display: flex;
  flex-direction: column;
  height: 100vh;
  font-family: "Open Sans", "Noto Sans", sans-serif;
  font-size: 14px;
  color: #000;
  white-space: nowrap;
`;

const MenuBar = styled.nav`
  flex: none;
  display: flex;
  gap: 21px;
  height: 26px;
  padding-left: 8px;
  border-bottom: 1px solid #a0a0a0;
`;

const MenuButton = styled.button`
  height: 25px;
`;

const ToolRow = styled.div`
  flex: none;
  display: flex;
  height: 34px;
  border-top: 1px solid #fff;
  ${({ $last }) => $last && "border-bottom: 1px solid #a0a0a0;"}
`;

const Strip = styled.div`
  display: flex;
  align-items: center;
  padding-right: 1px;
  border-right: 1px solid #a0a0a0;
  border-bottom: 1px solid #a0a0a0;
  & + & {
    border-left: 1px solid #fff;
  }
`;

const Grip = styled.div`
  width: 3px;
  height: 28px;
  margin: 0 2px 0 1px;
  background: repeating-linear-gradient(#999 0 1px, #f0f0f0 1px 2px);
`;

const ToolButton = styled.button`
  ${center}
  gap: 4px;
  width: ${({ $menu }) => ($menu ? 45 : 32)}px;
  height: 30px;
  margin: 0 1px;
  padding-right: ${({ $menu }) => ($menu ? 3 : 0)}px;
  ${({ $active }) => $active && pressed}
`;

const WideTool = styled(ToolButton)`
  justify-content: flex-start;
  width: ${({ $width }) => $width - 2}px;
  padding-left: 5px;
`;

const Period = styled(ToolButton)`
  font-family: "DejaVu Sans Condensed", "Noto Sans", sans-serif;
  font-size: 12px;
  color: #555;
`;

const Caret = styled.span`
  border: 4px solid transparent;
  border-top-color: #000;
  border-bottom: 0;
`;

const WhiteCaret = styled(Caret)`
  border-width: 5px;
  border-bottom: 0;
  border-top-color: #fff;
`;

const Divider = styled.div`
  width: 1px;
  height: 28px;
  margin: 0 3px 0 2px;
  background: #a0a0a0;
`;

const RightTools = styled.div`
  display: flex;
  align-items: center;
  gap: 6px;
  margin-left: auto;
  padding-right: 8px;
`;

const ChatButton = styled.button`
  position: relative;
  width: 30px;
  height: 28px;
  padding-top: 4px;
`;

const Badge = styled.span`
  ${center}
  position: absolute;
  top: 0;
  right: 0;
  width: 20px;
  height: 20px;
  border-radius: 50%;
  background: linear-gradient(#ee5a3a, #d31c10);
  color: #fff;
  font-size: 14px;
  font-weight: 700;
`;

const Workspace = styled.div`
  flex: 1;
  display: flex;
  min-height: 0;
`;

const Sidebar = styled.aside`
  flex: none;
  display: flex;
  flex-direction: column;
  width: 187px;
  border-right: 1px solid #fff;
`;

const Panel = styled.section`
  flex: ${({ $grow }) => $grow} 1 0;
  display: flex;
  flex-direction: column;
  min-height: 0;
  padding: 3px 5px 0 4px;
  ${({ $line }) => $line && "border-top: 1px solid #a0a0a0;"}
`;

const PanelTitle = styled.header`
  flex: none;
  display: flex;
  height: 17px;
  line-height: 16px;
  h2 {
    flex: none;
    width: 158px;
    padding-left: 4px;
    background: linear-gradient(90deg, #bccbdc, #d5e3f3);
  }
`;

const CloseButton = styled.button`
  ${center}
  flex: none;
  width: 21px;
`;

const ListBox = styled.div`
  flex: 1;
  display: flex;
  min-height: 0;
  border-top: 1px solid #828790;
  border-left: 1px solid #828790;
`;

const ListView = styled.div`
  flex: none;
  width: 155px;
  padding-right: 1px;
  overflow: hidden;
  background: #fff;
`;

const Quotes = styled.table`
  width: 154px;
  table-layout: fixed;
  border-collapse: separate;
  border-spacing: 0;
  th {
    height: 26px;
    padding: 2px 5px 0 6px;
    border-right: 1px solid #e3e3e3;
    border-bottom: 1px solid #c8c8c8;
    font-weight: 400;
    text-align: right;
  }
  th:first-child {
    text-align: left;
  }
`;

const QuoteRow = styled.tr`
  background: ${({ $selected }) => ($selected ? "#0078d7" : "#ffc0cb")};
  color: ${({ $dir, $selected }) => ($selected ? "#fff" : $dir === "up" ? "#0000ff" : "#ff0000")};
  td {
    height: 25px;
    padding: 2px 4px 0;
    border-right: 1px solid #c8c8c8;
    border-bottom: 1px solid ${({ $selected }) => ($selected ? "#0078d7" : "#c8c8c8")};
    text-align: right;
    line-height: 18px;
  }
  td:first-child {
    padding-right: 0;
    color: ${({ $selected }) => ($selected ? "#fff" : "#000")};
  }
`;

const SymbolName = styled.span`
  display: flex;
  align-items: center;
  gap: 6px;
  overflow: hidden;
`;

const ScrollBar = styled.div`
  display: flex;
  flex-direction: column;
  align-items: center;
  width: 19px;
  padding: 8px 0;
`;

const Space = styled.div`
  flex: ${({ $grow }) => $grow} 1 0;
`;

const Thumb = styled(Space)`
  width: 100%;
  background: #cdcdcd;
`;

const PanelTabs = styled.div`
  flex: none;
  display: flex;
  height: 31px;
  margin-right: 3px;
  padding-left: 3px;
`;

const PanelTab = styled.button`
  width: ${({ $width }) => $width}px;
  height: 25px;
  border-top: 1px solid #000;
  color: #838383;
  line-height: 20px;
  ${({ $active }) =>
    $active
      ? "border: 1px solid #000; border-top-color: #fff; background: #fff; color: #000;"
      : "background: linear-gradient(#777, #777) 100% 50% / 1px 18px no-repeat;"}
`;

const Tree = styled.ul`
  margin: 0;
  padding: 2px 0 0;
  list-style: none;
`;

const TreeRow = styled.li`
  display: flex;
  align-items: center;
  height: 22px;
  overflow: hidden;
  svg + svg {
    margin-right: 7px;
  }
`;

const Main = styled.main`
  flex: 1;
  display: flex;
  flex-direction: column;
  min-width: 0;
`;

const Desktop = styled.div`
  flex: 1;
  display: grid;
  grid-template-columns: 858fr 870fr;
  min-height: 0;
  padding: 0 3px 2px 0;
  border: solid #5a5a5a;
  border-width: 2px 0 1px 1px;
  background: #b4b4b4;
`;

const Frame = styled.section`
  display: flex;
  flex-direction: column;
  min-width: 0;
  min-height: 0;
  border: 1px solid #eaf1f8;
  background: #d7e4f2;
  ${({ $active }) =>
    $active &&
    css`
      margin-bottom: 1px;
      border-color: #000;
      border-radius: 4px 4px 0 0;
      background: #bad1ea;
      box-shadow: inset -1px -1px #36c5e0, inset 1px 1px #fff;
    `}
`;

const TitleBar = styled.header`
  flex: none;
  display: flex;
  align-items: center;
  gap: 2px;
  height: 36px;
  padding: 6px 7px 0 11px;
  background: linear-gradient(#bfccda, #c9d5e1 60%, #d7e4f2);
  color: #9a9a9a;
  h2 {
    flex: 1;
    padding-left: 3px;
  }
  ${({ $active }) =>
    $active &&
    css`
      height: 35px;
      margin: 1px 1px 0;
      padding: 5px 9px 0 10px;
      background: linear-gradient(#9ab5d1, #a9c1dd 60%, #bad1ea);
      color: #000;
    `}
`;

const Control = styled.button`
  ${center}
  width: 42px;
  height: 24px;
  border: 1px solid ${({ $active }) => ($active ? "#5f7896" : "#8b9cb5")};
  border-radius: 2px;
  box-shadow: inset 0 0 0 1px rgba(255, 255, 255, 0.4);
  background: ${({ $active }) => ($active ? "linear-gradient(#c0d3e8 45%, #97b1ce 50%, #b3cbe5)" : "linear-gradient(#c9d5e2, #cfdcea)")};
  ${({ $danger }) => $danger && "border-color: #481822; background: linear-gradient(#e29d92 0, #d3796b 45%, #b83a24 50%, #cf6b55);"}
`;

const ChartBody = styled.div`
  flex: 1;
  display: flex;
  flex-direction: column;
  min-height: 0;
  margin: ${({ $active }) => ($active ? "0 9px 8px 8px" : "0 6px 7px 8px")};
  padding: 2px 0 0 2px;
  border: solid;
  border-width: 2px 1px 1px 2px;
  border-color: #777 #fff #fff #777;
  background: #000;
  ${chartFont}
`;

const PlotRow = styled.div`
  flex: ${({ $grow }) => $grow} 1 0;
  display: flex;
  min-height: 0;
  & + & {
    margin-top: 1px;
  }
`;

const Plot = styled.div`
  position: relative;
  flex: 1;
  min-width: 0;
  border: 1px solid #fff;
  overflow: hidden;
`;

const PlotSvg = styled.svg`
  width: 100%;
  height: 100%;
  shape-rendering: crispEdges;
`;

const PlotTitle = styled.div`
  position: absolute;
  top: 4px;
  left: 3px;
  display: flex;
  align-items: center;
  gap: 5px;
`;

const PlotValues = styled.span`
  padding-left: 5px;
`;

const MacdTitle = styled.div`
  position: absolute;
  top: 5px;
  left: 4px;
`;

const Axis = styled.div`
  position: relative;
  flex: none;
  display: flex;
  flex-direction: column;
  gap: 37px;
  width: 63px;
  padding-top: ${({ $start }) => $start}px;
  overflow: hidden;
`;

const Tick = styled.div`
  flex: none;
  display: flex;
  align-items: center;
  gap: 4px;
  height: 12px;
  line-height: 14px;
  &::before {
    content: "";
    width: 2px;
    height: 1px;
    background: #fff;
  }
`;

const PriceTag = styled.div`
  position: absolute;
  left: 1px;
  width: 56px;
  height: 14px;
  padding-left: 5px;
  line-height: 14px;
  background: #fff;
  color: #000;
`;

const MacdAxis = styled.div`
  flex: none;
  display: grid;
  grid-template-rows: 126fr 113fr 12px;
  width: 63px;
  padding: 4px 0 2px 3px;
`;

const Dates = styled.div`
  flex: none;
  display: flex;
  height: 24px;
  overflow: hidden;
`;

const DateTick = styled.div`
  flex: none;
  width: 96px;
  &::before {
    content: "";
    display: block;
    width: 1px;
    height: 3px;
    margin: 0 0 2px 1px;
    background: #fff;
  }
  &:last-child {
    width: auto;
  }
`;

const ChartTabs = styled.div`
  flex: none;
  display: flex;
  height: 22px;
  border-top: 1px solid #000;
`;

const ChartTab = styled.button`
  width: 110px;
  padding-left: 4px;
  border-left: 1px solid #888;
  color: #838383;
  ${({ $active }) =>
    $active && "width: 108px; margin-top: -1px; padding: 0; border: 1px solid #000; border-width: 0 1px; background: #fff; color: #000;"}
`;

const TabArrows = styled.div`
  display: flex;
  align-items: center;
  gap: 19px;
  margin-left: auto;
  padding-right: 12px;
`;

const ArrowButton = styled.button`
  border: 4px solid transparent;
  ${({ $dir }) =>
    $dir === "left" ? "border-left: 0; border-right-color: #9a9a9a;" : "border-right: 0; border-left-color: #9a9a9a;"}
`;
